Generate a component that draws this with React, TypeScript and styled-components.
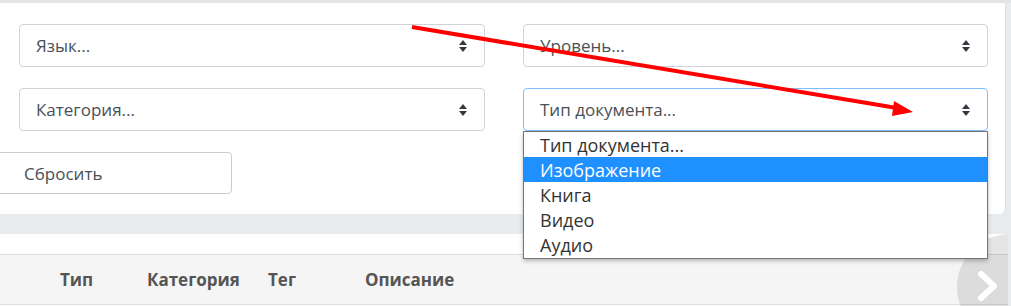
import styled, { createGlobalStyle } from 'styled-components';

const GlobalStyle = createGlobalStyle`
  html, body {
    margin: 0;
    padding: 0;
    background: #e9ecef;
    font-family: "Open Sans", "Noto Sans", sans-serif;
  }
  body {
    width: 1011px;
    height: 306px;
    overflow: hidden;
  }
`;

const typeOptions = ['Тип документа...', 'Изображение', 'Книга', 'Видео', 'Аудио'];
const headers = [
  { label: 'Тип', width: 87 },
  { label: 'Категория', width: 121 },
  { label: 'Тег', width: 97 },
  { label: 'Описание', width: 200 },
];

function UpDown() {
  return (
    <svg width="8" height="12" viewBox="0 0 8 12">
      <path d="M0 5 L4 0 L8 5 Z M0 7 L4 12 L8 7 Z" fill="#343a40" />
    </svg>
  );
}

function Select({ label, focused }: { label: string; focused?: boolean }) {
  return (
    <S.Select $focused={focused}>
      <span>{label}</span>
      <UpDown />
    </S.Select>
  );
}

export default function App() {
  return (
    <>
      <GlobalStyle />
      <S.Page>
        <S.FilterCard>
          <S.Grid>
            <Select label="Язык..." />
            <Select label="Уровень..." />
            <Select label="Категория..." />
            <S.Anchor>
              <Select label="Тип документа..." focused />
              <S.Dropdown>
                {typeOptions.map((o, i) => (
                  <S.Option key={o} $active={i === 1}>
                    {o}
                  </S.Option>
                ))}
              </S.Dropdown>
            </S.Anchor>
          </S.Grid>
          <S.ResetButton>Сбросить</S.ResetButton>
        </S.FilterCard>
        <S.TablePanel>
          <S.HeaderRow>
            <S.HeadSpacer />
            {headers.map((h) => (
              <S.HeadCell key={h.label} $w={h.width}>
                {h.label}
              </S.HeadCell>
            ))}
          </S.HeaderRow>
          <S.NextButton>
            <svg width="22" height="32" viewBox="0 0 22 32">
              <path d="M4 4 L17 16 L4 28" fill="none" stroke="#fff" strokeWidth="6" strokeLinecap="round" strokeLinejoin="round" />
            </svg>
          </S.NextButton>
        </S.TablePanel>
        <S.Annotation width="1011" height="306" viewBox="0 0 1011 306">
          <line x1="412" y1="27" x2="897" y2="108" stroke="#ff0000" strokeWidth="4" />
          <polygon points="913,112 894,101 892,116" fill="#ff0000" />
        </S.Annotation>
      </S.Page>
    </>
  );
}

const S = {
  Page: styled.div`
    position: relative;
    width: 1011px;
    height: 306px;
    padding-top: 3px;
    box-sizing: border-box;
    background: #e9ecef;
    overflow: hidden;
    &::before {
      content: '';
      position: absolute;
      left: 0;
      top: 0;
      width: 100%;
      height: 3px;
      background: #e4e4e4;
    }
  `,
  FilterCard: styled.div`
    width: 1006px;
    height: 211px;
    box-sizing: border-box;
    background: #fff;
    border-right: 1px solid #dcdfe3;
    border-radius: 0 0 6px 0;
    padding: 21px 19px 0;
  `,
  Grid: styled.div`
    display: grid;
    grid-template-columns: 466px 465px;
    column-gap: 38px;
    row-gap: 21px;
  `,
  Anchor: styled.div`
    position: relative;
  `,
  Select: styled.div<{ $focused?: boolean }>`
    height: 43px;
    box-sizing: border-box;
    border: 1px solid ${(p) => (p.$focused ? '#80bdff' : '#ced4da')};
    border-radius: 4px;
    background: #fff;
    display: flex;
    align-items: center;
    justify-content: space-between;
    padding: 0 17px 0 16px;
    font-size: 17px;
    color: #495057;
  `,
  Dropdown: styled.div`
    position: absolute;
    left: 0;
    right: 0;
    top: 43px;
    background: #fff;
    border: 1px solid #767676;
    box-shadow: 0 2px 4px rgba(0, 0, 0, 0.25);
    padding-bottom: 1px;
    z-index: 2;
  `,
  Option: styled.div<{ $active?: boolean }>`
    height: 25px;
    line-height: 26px;
    padding-left: 16px;
    font-size: 18px;
    color: ${(p) => (p.$active ? '#fff' : '#333')};
    background: ${(p) => (p.$active ? '#1e90ff' : 'transparent')};
  `,
  ResetButton: styled.button`
    display: block;
    margin: 21px 0 0 -27px;
    width: 240px;
    height: 42px;
    box-sizing: border-box;
    border: 1px solid #cccccc;
    border-radius: 4px;
    background: #fff;
    text-align: left;
    padding: 0 0 0 31px;
    font-family: "Open Sans", sans-serif;
    font-size: 17px;
    color: #495057;
  `,
  TablePanel: styled.div`
    position: relative;
    margin-top: 20px;
    width: 1008px;
    height: 72px;
    background: #fff;
    padding-top: 20px;
    box-sizing: border-box;
    overflow: hidden;
  `,
  HeaderRow: styled.div`
    display: flex;
    align-items: center;
    height: 51px;
    box-sizing: border-box;
    background: #f5f5f5;
    border-top: 1px solid #dddddd;
    border-bottom: 1px solid #dddddd;
  `,
  HeadSpacer: styled.div`
    width: 60px;
  `,
  HeadCell: styled.div<{ $w: number }>`
    width: ${(p) => p.$w}px;
    font-size: 17px;
    font-weight: 700;
    color: #555555;
  `,
  NextButton: styled.div`
    position: absolute;
    left: 957px;
    top: 0;
    width: 106px;
    height: 106px;
    border-radius: 50%;
    background: rgba(0, 0, 0, 0.1);
    display: flex;
    align-items: flex-start;
    padding: 36px 0 0 20px;
    box-sizing: border-box;
  `,
  Annotation: styled.svg`
    position: absolute;
    left: 0;
    top: 0;
    pointer-events: none;
    z-index: 5;
  `,
};
